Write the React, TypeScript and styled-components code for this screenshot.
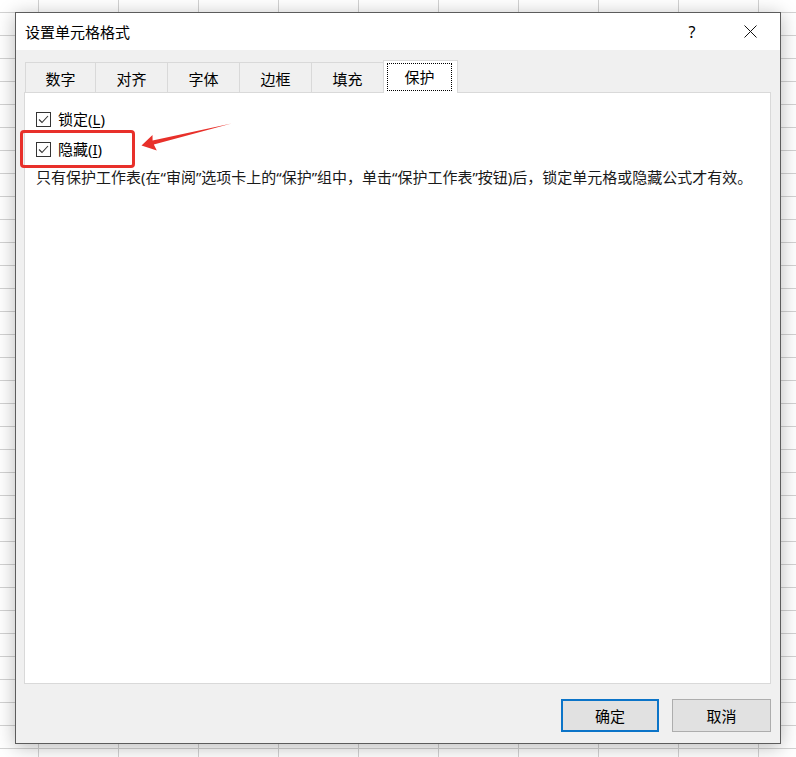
import React from "react";
import styled, { createGlobalStyle } from "styled-components";

const GlobalStyle = createGlobalStyle`
  html, body { margin: 0; padding: 0; background: #ffffff; }
  body { font-family: "Noto Sans", "Noto Sans CJK SC", sans-serif; }
  * { box-sizing: border-box; }
`;

const FONT = `"Noto Sans", "Noto Sans CJK SC", sans-serif`;

const Sheet = styled.div`
  width: 796px;
  height: 757px;
  overflow: hidden;
  padding: 12px 0 0 15px;
  background-color: #ffffff;
  background-image:
    linear-gradient(to right, #d2d2d2 1px, transparent 1px),
    linear-gradient(to bottom, #d2d2d2 1px, transparent 1px);
  background-size: 80px 23px, 80px 23px;
  background-position: 38px 12px, 38px 12px;
`;

const Dialog = styled.div`
  width: 766px;
  height: 732px;
  border: 1px solid #5c5c5c;
  background: #f0f0f0;
  box-shadow: 0 3px 18px rgba(0, 0, 0, 0.28);
  display: flex;
  flex-direction: column;
  font-family: ${FONT};
  color: #000;
`;

const TitleBar = styled.div`
  height: 37px;
  flex: none;
  background: #ffffff;
  display: flex;
  align-items: center;
  padding-left: 9px;
`;

const Title = styled.div`
  flex: 1;
  font-size: 15px;
  line-height: 20px;
`;

const Controls = styled.div`
  display: flex;
  gap: 12px;
  padding-right: 7px;
`;

const TitleButton = styled.div`
  width: 46px;
  height: 37px;
  display: flex;
  align-items: center;
  justify-content: center;
  font-size: 16px;
`;

const Body = styled.div`
  flex: 1;
  display: flex;
  flex-direction: column;
  padding: 10px 9px 0 8px;
`;

const TabRow = styled.div`
  height: 32px;
  display: flex;
  align-items: flex-end;
  padding-left: 1px;
`;

const Tab = styled.div<{ $w: number }>`
  width: ${(p) => p.$w}px;
  height: 30px;
  border-top: 1px solid #d9d9d9;
  border-left: 1px solid #d9d9d9;
  background: #f0f0f0;
  display: flex;
  justify-content: center;
  align-items: center;
  padding-top: 3px;
  font-size: 15px;
  line-height: 20px;
`;

const ActiveTab = styled.div`
  position: relative;
  z-index: 1;
  width: 75px;
  height: 33px;
  margin-bottom: -1px;
  border: 1px solid #d9d9d9;
  border-bottom: none;
  background: #ffffff;
  padding: 2px 5px 0 3px;
`;

const FocusLabel = styled.div`
  height: 28px;
  border: 1px dotted #000;
  display: flex;
  align-items: center;
  justify-content: center;
  font-size: 15px;
  line-height: 20px;
`;

const Panel = styled.div`
  position: relative;
  height: 592px;
  border: 1px solid #d9d9d9;
  background: #ffffff;
  padding: 11px 0 0 11px;
`;

const CheckRow = styled.label`
  height: 30px;
  display: flex;
  align-items: center;
  gap: 7px;
  font-size: 15px;
  line-height: 20px;
`;

const Box = styled.span`
  width: 15px;
  height: 15px;
  border: 1px solid #333;
  background: #fff;
  display: flex;
  align-items: center;
  justify-content: center;
`;

const Key = styled.span`
  text-decoration: underline;
  text-underline-offset: 2px;
`;

const Description = styled.div`
  margin-top: 3px;
  font-size: 15px;
  line-height: 20px;
  color: #1a1a1a;
  white-space: nowrap;
`;

const RedBox = styled.div`
  position: absolute;
  left: -5px;
  top: 37px;
  width: 115px;
  height: 38px;
  border: 3px solid #e8302a;
  border-radius: 4px;
`;

const ArrowSvg = styled.svg`
  position: absolute;
  left: 106px;
  top: 23px;
`;

const Footer = styled.div`
  flex: 1;
  display: flex;
  justify-content: flex-end;
  align-items: flex-start;
  gap: 13px;
  padding-top: 15px;
`;

const Button = styled.button<{ $primary?: boolean; $w: number }>`
  width: ${(p) => p.$w}px;
  height: 33px;
  font-family: ${FONT};
  font-size: 15px;
  color: #000;
  background: #e1e1e1;
  border: ${(p) => (p.$primary ? "2px solid #0b74c8" : "1px solid #adadad")};
  padding: 0;
  display: flex;
  align-items: center;
  justify-content: center;
`;

const Check = () => (
  <svg width="13" height="13" viewBox="0 0 13 13">
    <polyline points="2,6.5 5,9.5 11,3" fill="none" stroke="#333" strokeWidth="1.1" />
  </svg>
);

const tabs: { label: string; w: number }[] = [
  { label: "数字", w: 70 },
  { label: "对齐", w: 72 },
  { label: "字体", w: 72 },
  { label: "边框", w: 72 },
  { label: "填充", w: 72 },
];

export default function App() {
  return (
    <>
      <GlobalStyle />
      <Sheet>
        <Dialog>
          <TitleBar>
            <Title>设置单元格格式</Title>
            <Controls>
              <TitleButton>?</TitleButton>
              <TitleButton>
                <svg width="13" height="13" viewBox="0 0 13 13">
                  <path d="M0.5 0.5 L12.5 12.5 M12.5 0.5 L0.5 12.5" stroke="#111" strokeWidth="1" />
                </svg>
              </TitleButton>
            </Controls>
          </TitleBar>
          <Body>
            <TabRow>
              {tabs.map((t) => (
                <Tab key={t.label} $w={t.w}>
                  {t.label}
                </Tab>
              ))}
              <ActiveTab>
                <FocusLabel>保护</FocusLabel>
              </ActiveTab>
            </TabRow>
            <Panel>
              <CheckRow>
                <Box>
                  <Check />
                </Box>
                <span>
                  锁定(<Key>L</Key>)
                </span>
              </CheckRow>
              <CheckRow>
                <Box>
                  <Check />
                </Box>
                <span>
                  隐藏(<Key>I</Key>)
                </span>
              </CheckRow>
              <Description>
                只有保护工作表(在“审阅”选项卡上的“保护”组中，单击“保护工作表”按钮)后，锁定单元格或隐藏公式才有效。
              </Description>
              <RedBox />
              <ArrowSvg width="110" height="45" viewBox="130 115 110 45">
                <polygon
                  points="140.5,144.5 151.5,134 151.6,139.4 230.5,122.6 152.8,143.6 155.8,149.5"
                  fill="#e8302a"
                />
              </ArrowSvg>
            </Panel>
            <Footer>
              <Button $primary $w={98}>
                确定
              </Button>
              <Button $w={99}>取消</Button>
            </Footer>
          </Body>
        </Dialog>
      </Sheet>
    </>
  );
}
